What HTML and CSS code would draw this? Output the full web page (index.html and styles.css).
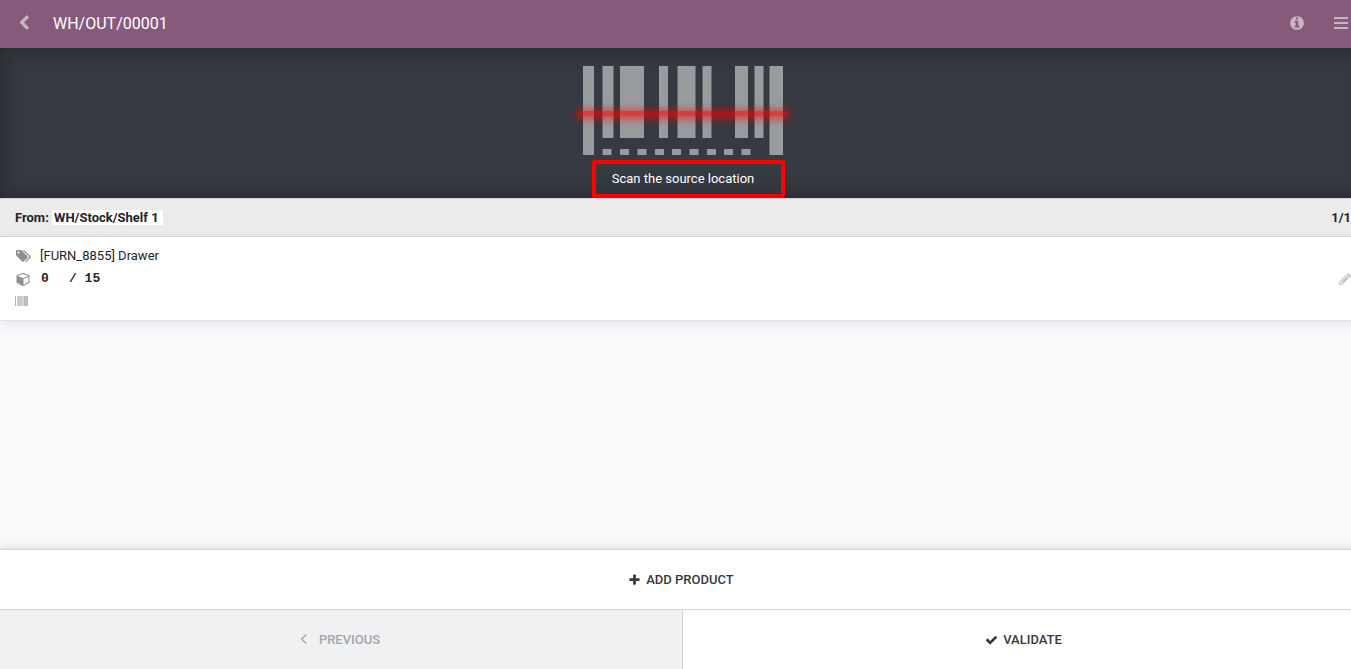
FILE: index.html
```html
<!DOCTYPE html>
<html lang="en">
<head>
<meta charset="UTF-8">
<meta name="viewport" content="width=device-width, initial-scale=1.0">
<title>WH/OUT/00001</title>
<link rel="stylesheet" href="styles.css">
</head>
<body>

<div class="barcode-app">
    <header class="topbar">
        <button class="icon-button back" aria-label="Back">
            <svg class="icon-md" viewBox="0 0 1792 1792"><path d="M1427 301l-531 531 531 531q19 19 19 45t-19 45l-166 166q-19 19-45 19t-45-19l-742-742q-19-19-19-45t19-45l742-742q19-19 45-19t45 19l166 166q19 19 19 45t-19 45z"/></svg>
        </button>
        <h1>WH/OUT/00001</h1>
        <button class="icon-button" aria-label="Information">
            <svg class="icon-md" viewBox="0 0 1792 1792"><path d="M1152 1376v-160q0-14-9-23t-23-9h-96v-512q0-14-9-23t-23-9h-320q-14 0-23 9t-9 23v160q0 14 9 23t23 9h96v320h-96q-14 0-23 9t-9 23v160q0 14 9 23t23 9h448q14 0 23-9t9-23zm-128-896v-160q0-14-9-23t-23-9h-192q-14 0-23 9t-9 23v160q0 14 9 23t23 9h192q14 0 23-9t9-23zm640 416q0 209-103 385.5t-279.5 279.5-385.5 103-385.5-103-279.5-279.5-103-385.5 103-385.5 279.5-279.5 385.5-103 385.5 103 279.5 279.5 103 385.5z"/></svg>
        </button>
        <button class="icon-button" aria-label="Menu">
            <svg class="icon-md" viewBox="0 0 16 16"><path d="M1 2h14v2H1zM1 7h14v2H1zM1 12h14v2H1z"/></svg>
        </button>
    </header>

    <section class="scanner">
        <div class="barcode">
            <svg width="200" height="89" viewBox="0 0 200 89">
                <path d="M0 0h11v89H0zM19.500 0h11v72h-11zM37 0h24v72H37zM76 0h9v72h-9zM94.500 0h18v72h-18zM119.500 0h9v72h-9zM152 0h13v72h-13zM171.500 0h9v72h-9zM186.500 0H200v89h-13.500z"/>
                <path d="M19.500 83h9v6h-9zM37 83h9v6h-9zM54.500 83h9v6h-9zM72 83h9v6h-9zM89 83h9v6h-9zM106.500 83h9v6h-9zM124 83h9v6h-9zM141 83h9v6h-9zM158.500 83h9v6h-9z"/>
            </svg>
            <span class="laser"></span>
        </div>
        <div class="message">Scan the source location</div>
    </section>

    <div class="location-bar">
        <div>From: <span class="location">WH/Stock/Shelf 1</span></div>
        <div>1/1</div>
    </div>

    <main class="lines">
        <div class="line">
            <div class="line-info">
                <div class="line-row">
                    <svg class="icon-sm" viewBox="0 0 1920 1792"><path d="M448 448q0-53-37.500-90.500t-90.500-37.500-90.500 37.500-37.500 90.500 37.500 90.500 90.500 37.500 90.500-37.500 37.500-90.500zm1067 576q0 53-37 90l-491 492q-39 37-91 37-53 0-90-37l-715-716q-38-37-64.500-101t-26.500-117v-416q0-52 38-90t90-38h416q53 0 117 26.500t102 64.500l715 714q37 39 37 91zm384 0q0 53-37 90l-491 492q-39 37-91 37-36 0-59-14t-53-45l470-470q37-37 37-90 0-52-37-91l-715-714q-38-38-102-64.500t-117-26.500h224q53 0 117 26.500t102 64.500l715 714q37 39 37 91z"/></svg>
                    <span>[FURN_8855] Drawer</span>
                </div>
                <div class="line-row">
                    <svg class="icon-sm" viewBox="0 0 1792 1792"><path d="M896 1629l640-349v-636l-640 233v752zm-64-865l698-254-698-254-698 254zm832-252v768q0 35-18 65t-49 47l-704 384q-28 16-61 16t-61-16l-704-384q-31-17-49-47t-18-65v-768q0-40 23-73t61-47l704-256q22-8 44-8t44 8l704 256q38 14 61 47t23 73z"/></svg>
                    <span class="qty"><span class="qty-done">0</span>/ 15</span>
                </div>
                <div class="line-row">
                    <svg class="tracking" width="13" height="10" viewBox="0 0 13 10"><path fill="#b0b4b8" d="M0 0h1v10H0z"/><path fill="#c9cbce" d="M2 0h2v10H2z"/><path fill="#cbc6d2" d="M4 0h3v10H4z"/><path fill="#dfd3cc" d="M7 0h2v10H7z"/><path fill="#b9babd" d="M9 0h2v10H9z"/><path fill="#cec3bb" d="M11 0h1v10h-1z"/><path fill="#b5b2b0" d="M12 0h1v10h-1z"/></svg>
                </div>
            </div>
            <button class="icon-button edit" aria-label="Edit">
                <svg class="icon-sm" viewBox="0 0 1792 1792"><path d="M491 1536l91-91-235-235-91 91v107h128v128h107zm523-928q0-22-22-22-10 0-17 7l-542 542q-7 7-7 17 0 22 22 22 10 0 17-7l542-542q7-7 7-17zm-54-192l416 416-832 832h-416v-416zm683 96q0 53-37 90l-166 166-416-416 166-165q36-38 90-38 53 0 91 38l235 234q37 39 37 91z"/></svg>
            </button>
        </div>
    </main>

    <footer class="controls">
        <button class="control add">
            <svg class="icon-sm" viewBox="0 0 1792 1792"><path d="M1600 736v192q0 40-28 68t-68 28h-416v416q0 40-28 68t-68 28h-192q-40 0-68-28t-28-68v-416h-416q-40 0-68-28t-28-68v-192q0-40 28-68t68-28h416v-416q0-40 28-68t68-28h192q40 0 68 28t28 68v416h416q40 0 68 28t28 68z"/></svg>
            Add product
        </button>
        <button class="control previous" disabled>
            <svg class="icon-sm" viewBox="0 0 14 14"><path d="M9 1L4 6l5 5"/></svg>
            Previous
        </button>
        <button class="control">
            <svg class="icon-sm" viewBox="0 0 1792 1792"><path d="M1671 566q0 40-28 68l-724 724-136 136q-28 28-68 28t-68-28l-136-136-362-362q-28-28-28-68t28-68l136-136q28-28 68-28t68 28l294 295 656-657q28-28 68-28t68 28l136 136q28 28 28 68z"/></svg>
            Validate
        </button>
    </footer>
</div>

</body>
</html>
```
FILE: styles.css
```css
* {
    box-sizing: border-box;
}
body {
    margin: 0;
    overflow: hidden;
    font-family: Roboto, "Liberation Sans", sans-serif;
    font-size: 13px;
    line-height: 20px;
    color: #212529;
    background-color: #f8f9fb;
}
svg {
    display: block;
    flex: none;
    fill: currentColor;
}
button {
    font: inherit;
    color: inherit;
    border: none;
    cursor: pointer;
}
.icon-sm {
    width: 14px;
    height: 14px;
}
.icon-md {
    width: 16px;
    height: 16px;
}
/* The right gutter runs past the edge of the window */
.barcode-app {
    display: flex;
    flex-direction: column;
    min-height: 100vh;
    margin-right: -15px;
}

/* Top bar */
.topbar {
    display: flex;
    align-items: center;
    gap: 28px;
    height: 48px;
    padding: 0 17px 2px 16px;
    background-color: #875a7b;
    color: white;
}
.topbar h1 {
    flex: 1;
    margin: 0;
    padding-top: 2px;
    font-size: 16px;
    font-weight: 400;
}
.icon-button {
    padding: 0;
    background: none;
}
.topbar .icon-button {
    color: rgba(255, 255, 255, 0.55);
}
.back {
    margin-right: -7px;
}

/* Scanner */
.scanner {
    display: flex;
    flex-direction: column;
    align-items: center;
    height: 150px;
    padding-top: 18px;
    background-color: #363a42;
    box-shadow: inset 0 0 20px rgba(35, 38, 38, 0.9);
}
.barcode {
    position: relative;
    color: #999c9f;
}
.laser {
    position: absolute;
    top: 45px;
    left: -5px;
    right: -5px;
    height: 5px;
    background-color: rgba(255, 0, 0, 0.6);
    box-shadow: 0 1px 10px 1px rgba(255, 0, 0, 0.8);
}
.message {
    position: relative;
    margin-top: 14px;
    color: white;
}
.message::after {
    content: "";
    position: absolute;
    top: -9px;
    bottom: -9px;
    left: -20px;
    right: -31px;
    border: 4px solid #ff0000;
    border-radius: 2px;
}

/* Source location */
.location-bar {
    display: flex;
    justify-content: space-between;
    align-items: center;
    height: 39px;
    padding: 0 15px;
    font-weight: 700;
    background-color: #ebebeb;
    border-top: 1px solid #ced4da;
    border-bottom: 1px solid #ced4da;
}
.location {
    padding: 0 4px 0 2px;
    background-color: white;
}

/* Lines */
.lines {
    flex: 1;
}
.line {
    display: flex;
    justify-content: space-between;
    align-items: center;
    height: 84px;
    padding: 0 14px 0 15px;
    background-color: white;
    border-bottom: 1px solid #dee2e6;
    box-shadow: 0 4px 12px rgba(0, 0, 0, 0.08);
}
.line-info {
    display: grid;
    gap: 3px;
}
.line-row {
    display: flex;
    align-items: center;
    gap: 9px;
    height: 20px;
}
.line-row .icon-sm {
    width: 15px;
    margin-left: 1px;
    color: #8f8f8f;
}
.tracking {
    margin-bottom: 2px;
}
.qty {
    padding: 1px 0 0 1px;
    font-family: "Liberation Mono", monospace;
    font-weight: 700;
}
.qty-done {
    display: inline-block;
    width: 28px;
}
.edit {
    color: #c9c9c9;
}

/* Bottom controls */
.controls {
    display: grid;
    grid-template-columns: 1fr 1fr;
    border-top: 1px solid #ced4da;
    box-shadow: 0 -2px 8px rgba(0, 0, 0, 0.1);
}
.control {
    display: flex;
    justify-content: center;
    align-items: center;
    gap: 5px;
    height: 60px;
    padding: 0 8px 0 6px;
    font-weight: 500;
    text-transform: uppercase;
    color: #343a40;
    background-color: white;
    border-top: 1px solid #ced4da;
}
.control .icon-sm {
    width: 13px;
}
.control.add {
    grid-column: 1 / -1;
    height: 59px;
    padding-right: 10px;
    border-top: none;
}
.control.previous {
    gap: 8px;
    padding: 1px 10px 0 6px;
    color: #a3a7ac;
    background-color: #f0f1f3;
    border-right: 1px solid #ced4da;
    cursor: default;
}
.previous path {
    fill: none;
    stroke: currentColor;
    stroke-width: 1.500;
}
```
